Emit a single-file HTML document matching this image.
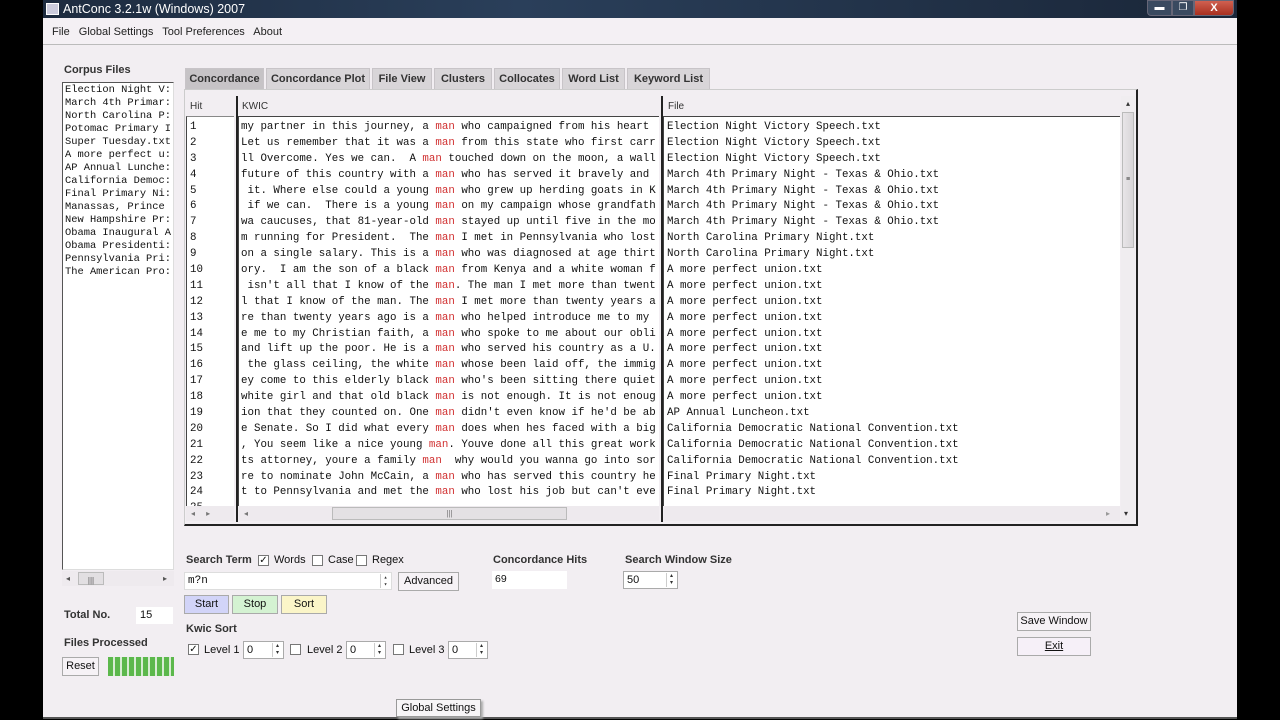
<!DOCTYPE html>
<html><head><meta charset="utf-8"><style>
*{margin:0;padding:0;box-sizing:border-box}
body{width:1280px;height:720px;background:#000;position:relative;overflow:hidden;font-family:"Liberation Sans",sans-serif;font-size:11px;color:#111}
.a{position:absolute}
.win{left:43px;top:0;width:1194px;height:719px;background:#f2eef2;border-bottom:2px solid #555}
.title{left:43px;top:0;width:1194px;height:18px;background:linear-gradient(90deg,#1d2b3f,#2a3f5a 40%,#1a2638);color:#fff;font-size:12.5px;line-height:18px;padding-left:20px}
.menu{left:43px;top:18px;width:1194px;height:27px;background:#f4f0f4;border-bottom:1px solid #bbb;font-size:11px;line-height:28px;padding-left:9px;color:#222}
.menu span{margin-right:6px}
.b{font-weight:bold;color:#333;font-size:11px}
.box{background:#fff}
.mono{font-family:"Liberation Mono","Courier New",monospace}
.list div{height:13px;line-height:13px;white-space:pre;overflow:hidden}
.tab{top:68px;height:22px;background:#d8d5d8;border:1px solid #c8c4c8;border-bottom:none;font-weight:bold;color:#333;text-align:center;line-height:21px;font-size:11px}
.rows div{height:15.9px;line-height:15.9px;white-space:pre;overflow:hidden;font-size:10.8px}
.m{color:#d03030}
.btn{border:1px solid #aaa;background:#f6f2f6;text-align:center;font-size:11px;line-height:17px}
.cb{width:11px;height:11px;border:1px solid #777;background:#fff;font-size:10px;line-height:9px;text-align:center}
.spin{background:#fff;border:1px solid #aaa;font-size:11px;line-height:16px;padding-left:3px}
.arr{position:absolute;right:1px;top:1px;width:10px;height:14px;border-left:1px solid #ccc;font-size:6px;line-height:7px;text-align:center;color:#333}
</style></head><body>
<div class="a win"></div>
<div class="a title"><div class="a" style="left:3px;top:3px;width:13px;height:12px;background:#ccd;border:1px solid #fff"></div>AntConc 3.2.1w (Windows) 2007</div>
<div class="a" style="left:1147px;top:0;width:25px;height:16px;background:#3a4a60;border:1px solid #667;border-radius:0 0 0 4px;color:#fff;text-align:center;font-size:10px;line-height:14px">▬</div>
<div class="a" style="left:1172px;top:0;width:22px;height:16px;background:#3a4a60;border:1px solid #667;color:#fff;text-align:center;font-size:10px;line-height:14px">❐</div>
<div class="a" style="left:1194px;top:0;width:40px;height:16px;background:linear-gradient(#d06050,#a83020);border:1px solid #667;border-radius:0 0 4px 0;color:#fff;text-align:center;font-weight:bold;font-size:11px;line-height:14px">X</div>
<div class="a menu"><span>File</span> <span>Global Settings</span> <span>Tool Preferences</span> <span>About</span></div>

<div class="a b" style="left:64px;top:64px">Corpus Files</div>
<div class="a box mono list" style="left:62px;top:82px;width:112px;height:488px;border:1px solid #555;border-right-color:#ddd;border-bottom-color:#ddd;padding:1px 2px;font-size:10.4px">
<div>Election Night V:</div><div>March 4th Primar:</div><div>North Carolina P:</div><div>Potomac Primary I</div><div>Super Tuesday.txt</div><div>A more perfect u:</div><div>AP Annual Lunche:</div><div>California Democ:</div><div>Final Primary Ni:</div><div>Manassas, Prince</div><div>New Hampshire Pr:</div><div>Obama Inaugural A</div><div>Obama Presidenti:</div><div>Pennsylvania Pri:</div><div>The American Pro:</div></div>
<div class="a" style="left:62px;top:571px;width:112px;height:15px;background:#eeeaee;font-size:8px;color:#555;line-height:15px"><span style="margin-left:4px">◂</span><span class="a" style="left:16px;top:1px;width:26px;height:13px;border:1px solid #bbb;background:#e2dfe2;text-align:center">|||</span><span class="a" style="left:101px">▸</span></div>
<div class="a b" style="left:64px;top:609px">Total No.</div>
<div class="a" style="left:136px;top:607px;width:37px;height:17px;background:#fff;padding-left:4px;line-height:17px">15</div>
<div class="a b" style="left:64px;top:637px">Files Processed</div>
<div class="a btn" style="left:62px;top:657px;width:37px;height:19px">Reset</div>
<div class="a" style="left:108px;top:657px;width:66px;height:19px;background:repeating-linear-gradient(90deg,#5cb84c 0 5px,#d8ecd4 5px 7px)"></div>

<div class="a tab" style="left:185px;width:79px;background:#c6c3c6">Concordance</div>
<div class="a tab" style="left:266px;width:104px">Concordance Plot</div>
<div class="a tab" style="left:372px;width:60px">File View</div>
<div class="a tab" style="left:434px;width:58px">Clusters</div>
<div class="a tab" style="left:494px;width:66px">Collocates</div>
<div class="a tab" style="left:562px;width:63px">Word List</div>
<div class="a tab" style="left:627px;width:83px">Keyword List</div>

<div class="a" style="left:184px;top:89px;width:954px;height:437px;background:#f2eef2;border:1px solid #ccc;border-right:2px solid #222;border-bottom:2px solid #222"></div>
<div class="a" style="left:190px;top:101px;font-size:10px;color:#333">Hit</div>
<div class="a" style="left:242px;top:101px;font-size:10px;color:#333">KWIC</div>
<div class="a" style="left:668px;top:101px;font-size:10px;color:#333">File</div>
<div class="a" style="left:236px;top:96px;width:2px;height:426px;background:#222"></div>
<div class="a" style="left:661px;top:96px;width:2px;height:426px;background:#222"></div>

<div class="a box mono rows" style="left:186px;top:116px;width:48px;height:390px;border-left:1px solid #444;border-top:1px solid #888;padding:3px 0 0 3px;overflow:hidden">
<div>1</div><div>2</div><div>3</div><div>4</div><div>5</div><div>6</div><div>7</div><div>8</div><div>9</div><div>10</div><div>11</div><div>12</div><div>13</div><div>14</div><div>15</div><div>16</div><div>17</div><div>18</div><div>19</div><div>20</div><div>21</div><div>22</div><div>23</div><div>24</div><div>25</div></div>
<div class="a box mono rows" style="left:238px;top:116px;width:421px;height:390px;border-left:1px solid #444;border-top:1px solid #444;padding:3px 0 0 2px;overflow:hidden">
<div>my partner in this journey, a <span class="m">man</span> who campaigned from his heart</div>
<div>Let us remember that it was a <span class="m">man</span> from this state who first carr</div>
<div>ll Overcome. Yes we can.  A <span class="m">man</span> touched down on the moon, a wall</div>
<div>future of this country with a <span class="m">man</span> who has served it bravely and</div>
<div> it. Where else could a young <span class="m">man</span> who grew up herding goats in K</div>
<div> if we can.  There is a young <span class="m">man</span> on my campaign whose grandfath</div>
<div>wa caucuses, that 81-year-old <span class="m">man</span> stayed up until five in the mo</div>
<div>m running for President.  The <span class="m">man</span> I met in Pennsylvania who lost</div>
<div>on a single salary. This is a <span class="m">man</span> who was diagnosed at age thirt</div>
<div>ory.  I am the son of a black <span class="m">man</span> from Kenya and a white woman f</div>
<div> isn't all that I know of the <span class="m">man</span>. The man I met more than twent</div>
<div>l that I know of the man. The <span class="m">man</span> I met more than twenty years a</div>
<div>re than twenty years ago is a <span class="m">man</span> who helped introduce me to my</div>
<div>e me to my Christian faith, a <span class="m">man</span> who spoke to me about our obli</div>
<div>and lift up the poor. He is a <span class="m">man</span> who served his country as a U.</div>
<div> the glass ceiling, the white <span class="m">man</span> whose been laid off, the immig</div>
<div>ey come to this elderly black <span class="m">man</span> who's been sitting there quiet</div>
<div>white girl and that old black <span class="m">man</span> is not enough. It is not enoug</div>
<div>ion that they counted on. One <span class="m">man</span> didn't even know if he'd be ab</div>
<div>e Senate. So I did what every <span class="m">man</span> does when hes faced with a big</div>
<div>, You seem like a nice young <span class="m">man</span>. Youve done all this great work</div>
<div>ts attorney, youre a family <span class="m">man</span>  why would you wanna go into sor</div>
<div>re to nominate John McCain, a <span class="m">man</span> who has served this country he</div>
<div>t to Pennsylvania and met the <span class="m">man</span> who lost his job but can't eve</div>
<div>    </div></div>
<div class="a box mono rows" style="left:663px;top:116px;width:457px;height:390px;border-left:1px solid #444;border-top:1px solid #444;padding:3px 0 0 3px;overflow:hidden">
<div>Election Night Victory Speech.txt</div><div>Election Night Victory Speech.txt</div><div>Election Night Victory Speech.txt</div>
<div>March 4th Primary Night - Texas &amp; Ohio.txt</div><div>March 4th Primary Night - Texas &amp; Ohio.txt</div><div>March 4th Primary Night - Texas &amp; Ohio.txt</div><div>March 4th Primary Night - Texas &amp; Ohio.txt</div>
<div>North Carolina Primary Night.txt</div><div>North Carolina Primary Night.txt</div>
<div>A more perfect union.txt</div><div>A more perfect union.txt</div><div>A more perfect union.txt</div><div>A more perfect union.txt</div><div>A more perfect union.txt</div><div>A more perfect union.txt</div><div>A more perfect union.txt</div><div>A more perfect union.txt</div><div>A more perfect union.txt</div>
<div>AP Annual Luncheon.txt</div><div>California Democratic National Convention.txt</div><div>California Democratic National Convention.txt</div><div>California Democratic National Convention.txt</div>
<div>Final Primary Night.txt</div><div>Final Primary Night.txt</div><div></div></div>
<div class="a" style="left:186px;top:506px;width:48px;height:15px;background:#eeeaee;font-size:8px;color:#777;line-height:15px;padding-left:5px">◂&nbsp;&nbsp;&nbsp;&nbsp;&nbsp;▸</div>
<div class="a" style="left:239px;top:506px;width:420px;height:15px;background:#eeeaee;font-size:8px;color:#777;line-height:15px;padding-left:5px">◂<span class="a" style="left:93px;top:1px;width:235px;height:13px;border:1px solid #bbb;background:#e4e1e4;text-align:center;line-height:12px">|||</span></div>
<div class="a" style="left:664px;top:506px;width:456px;height:15px;background:#eeeaee;font-size:8px;color:#999;line-height:15px"><span class="a" style="left:442px">▸</span></div>
<div class="a" style="left:1121px;top:96px;width:14px;height:426px;background:#f0edf0;font-size:8px;text-align:center;color:#333"><div style="margin-top:3px">▴</div><div class="a" style="left:1px;top:16px;width:12px;height:136px;border:1px solid #bbb;background:linear-gradient(90deg,#e8e5e8,#d8d5d8);font-size:7px;line-height:6px;padding-top:64px">≡</div><div class="a" style="left:3px;top:413px">▾</div></div>

<div class="a b" style="left:186px;top:554px">Search Term</div>
<div class="a cb" style="left:258px;top:555px">✓</div><div class="a" style="left:274px;top:554px">Words</div>
<div class="a cb" style="left:312px;top:555px"></div><div class="a" style="left:328px;top:554px">Case</div>
<div class="a cb" style="left:356px;top:555px"></div><div class="a" style="left:372px;top:554px">Regex</div>
<div class="a spin mono" style="left:184px;top:572px;width:208px;height:18px;border-color:#ddd">m?n<div class="arr">▴<br>▾</div></div>
<div class="a btn" style="left:398px;top:572px;width:61px;height:19px">Advanced</div>
<div class="a btn" style="left:184px;top:595px;width:45px;height:19px;background:#d2d4f8">Start</div>
<div class="a btn" style="left:232px;top:595px;width:46px;height:19px;background:#d4f2d2">Stop</div>
<div class="a btn" style="left:281px;top:595px;width:46px;height:19px;background:#fbf5c8">Sort</div>
<div class="a b" style="left:186px;top:623px">Kwic Sort</div>
<div class="a cb" style="left:188px;top:644px">✓</div><div class="a" style="left:204px;top:644px">Level 1</div>
<div class="a spin" style="left:243px;top:641px;width:41px;height:18px">0<div class="arr">▴<br>▾</div></div>
<div class="a cb" style="left:290px;top:644px"></div><div class="a" style="left:307px;top:644px">Level 2</div>
<div class="a spin" style="left:346px;top:641px;width:40px;height:18px">0<div class="arr">▴<br>▾</div></div>
<div class="a cb" style="left:393px;top:644px"></div><div class="a" style="left:409px;top:644px">Level 3</div>
<div class="a spin" style="left:448px;top:641px;width:40px;height:18px">0<div class="arr">▴<br>▾</div></div>

<div class="a b" style="left:493px;top:554px">Concordance Hits</div>
<div class="a" style="left:492px;top:571px;width:75px;height:18px;background:#fff;padding-left:3px;line-height:17px;font-size:10.5px">69</div>
<div class="a b" style="left:625px;top:554px">Search Window Size</div>
<div class="a spin" style="left:623px;top:571px;width:55px;height:18px">50<div class="arr">▴<br>▾</div></div>

<div class="a btn" style="left:1017px;top:612px;width:74px;height:19px">Save Window</div>
<div class="a btn" style="left:1017px;top:637px;width:74px;height:19px;background:#f6f0f8"><u>Exit</u></div>

<div class="a" style="left:396px;top:699px;width:85px;height:18px;border:1px solid #999;background:#f7f5f7;font-size:11px;text-align:center;line-height:17px;box-shadow:2px 2px 2px #aaa">Global Settings</div>
</body></html>
